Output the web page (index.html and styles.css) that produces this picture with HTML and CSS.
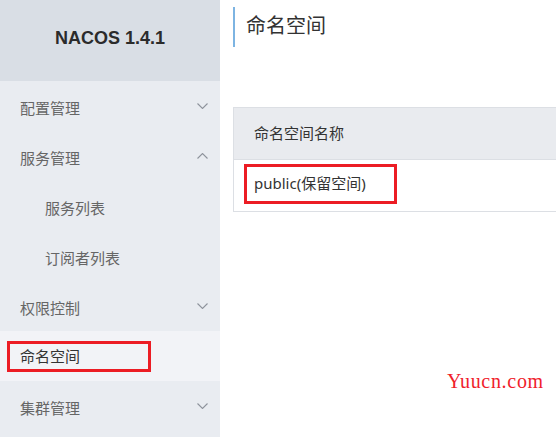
FILE: index.html
```html
<!DOCTYPE html>
<html lang="zh-CN">
<head>
<meta charset="utf-8">
<title>Nacos</title>
<link rel="stylesheet" href="styles.css">
</head>
<body>
<div class="layout">
  <aside class="sidebar">
    <div class="brand">NACOS 1.4.1</div>
    <ul class="menu">
      <li class="item"><span>配置管理</span><svg class="chev" width="11" height="6" viewBox="0 0 11 6"><polyline points="0.5,0.5 5.5,5.5 10.5,0.5"/></svg></li>
      <li class="item"><span>服务管理</span><svg class="chev" width="11" height="6" viewBox="0 0 11 6"><polyline points="0.5,5.5 5.5,0.5 10.5,5.5"/></svg></li>
      <li class="item sub"><span>服务列表</span></li>
      <li class="item sub"><span>订阅者列表</span></li>
      <li class="item"><span>权限控制</span><svg class="chev" width="11" height="6" viewBox="0 0 11 6"><polyline points="0.5,0.5 5.5,5.5 10.5,0.5"/></svg></li>
      <li class="item active"><span class="mark side-mark">命名空间</span></li>
      <li class="item"><span>集群管理</span><svg class="chev" width="11" height="6" viewBox="0 0 11 6"><polyline points="0.5,0.5 5.5,5.5 10.5,0.5"/></svg></li>
    </ul>
  </aside>
  <main class="content">
    <h1 class="title">命名空间</h1>
    <div class="table">
      <div class="thead">命名空间名称</div>
      <div class="trow"><span class="mark cell-mark">public(保留空间)</span></div>
    </div>
  </main>
</div>
<div class="watermark">Yuucn.com</div>
</body>
</html>
```

FILE: styles.css
```css
* { box-sizing: border-box; }
html, body { margin: 0; padding: 0; }
body {
  width: 556px;
  height: 437px;
  overflow: hidden;
  background: #fff;
  font-family: "Noto Sans", "Noto Sans CJK SC", sans-serif;
  color: #333;
  position: relative;
}
.layout { display: flex; height: 437px; }
.sidebar {
  width: 220px;
  flex: 0 0 220px;
  background: #e9ecf1;
  display: flex;
  flex-direction: column;
}
.brand {
  height: 81px;
  background: #d9dee5;
  display: flex;
  align-items: center;
  justify-content: center;
  font-family: "Liberation Sans", Arial, sans-serif;
  font-weight: bold;
  font-size: 18px;
  color: #2b2b2b;
  padding-bottom: 4px;
}
.menu { list-style: none; margin: 0; padding: 0; }
.item {
  height: 50px;
  display: flex;
  align-items: center;
  justify-content: space-between;
  padding: 2px 12px 0 20px;
  font-size: 15px;
  color: #666;
}
.item.sub { padding-left: 45px; }
.item.active { background: #f2f3f7; color: #333; padding: 0 12px 0 7px; }
.chev { fill: none; stroke: #8e939c; stroke-width: 1.1; margin-top: -2px; }
.mark { border: 3px solid #ec1c24; display: inline-block; }
.side-mark { width: 144px; height: 31px; line-height: 25px; padding-left: 10px; }
.content { flex: 1; padding-left: 13px; overflow: hidden; }
.title {
  margin: 7px 0 0 0;
  height: 40px;
  line-height: 38px;
  border-left: 2px solid #7db4e2;
  padding-left: 11px;
  font-size: 20px;
  font-weight: normal;
  color: #333;
}
.table {
  margin-top: 60px;
  width: 360px;
  border: 1px solid #dcdfe4;
  border-right: none;
}
.thead {
  height: 52px;
  line-height: 50px;
  background: #e9ebef;
  border-bottom: 1px solid #dcdfe4;
  padding-left: 20px;
  font-size: 15px;
  color: #333;
}
.trow {
  height: 51px;
  padding: 4px 0 0 10px;
  font-size: 15px;
  color: #333;
}
.cell-mark { width: 153px; height: 40px; line-height: 33px; padding-left: 7px; }
.watermark {
  position: absolute;
  left: 447px;
  top: 370px;
  font-family: "Liberation Serif", "Times New Roman", serif;
  font-size: 20px;
  letter-spacing: 0.7px;
  color: #f0212b;
}
```
